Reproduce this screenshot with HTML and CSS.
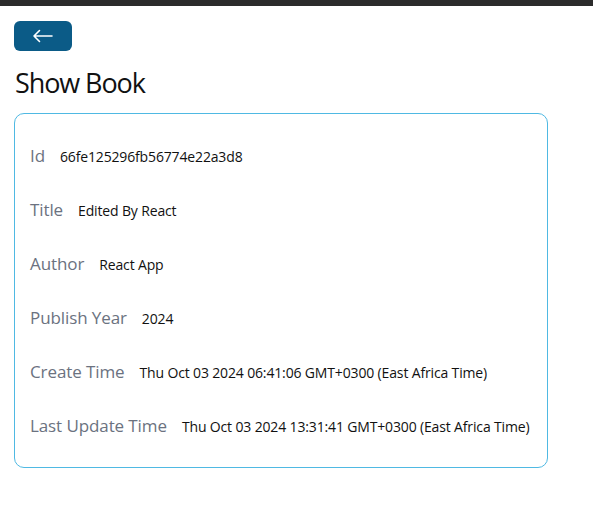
FILE: index.html
```html
<!DOCTYPE html>
<html>
<head>
<meta charset="utf-8">
<link rel="stylesheet" href="styles.css">
</head>
<body>
<div class="topbar"></div>
<div class="page">
  <button class="back" type="button" aria-label="Back">
    <svg width="22" height="14" viewBox="0 0 22 14" fill="none" stroke="#fff" stroke-width="1.6" stroke-linecap="round" stroke-linejoin="round"><path d="M20 7H2M7.5 1.5L2 7l5.5 5.5"/></svg>
  </button>
  <h1 class="title">Show Book</h1>
  <div class="card">
    <div class="row"><span class="label">Id</span><span class="value">66fe125296fb56774e22a3d8</span></div>
    <div class="row"><span class="label">Title</span><span class="value">Edited By React</span></div>
    <div class="row"><span class="label">Author</span><span class="value">React App</span></div>
    <div class="row"><span class="label">Publish Year</span><span class="value">2024</span></div>
    <div class="row"><span class="label">Create Time</span><span class="value">Thu Oct 03 2024 06:41:06 GMT+0300 (East Africa Time)</span></div>
    <div class="row"><span class="label">Last Update Time</span><span class="value">Thu Oct 03 2024 13:31:41 GMT+0300 (East Africa Time)</span></div>
  </div>
</div>
</body>
</html>
```
FILE: styles.css
```css
* { box-sizing: border-box; }
body {
  margin: 0;
  background: #fff;
  font-family: "Open Sans", "Noto Sans", sans-serif;
  color: #111;
}
.topbar {
  height: 6px;
  background: #2b2b2b;
}
.page {
  padding: 15px 14px;
}
.back {
  display: flex;
  align-items: center;
  justify-content: center;
  width: 58px;
  height: 30px;
  border: none;
  border-radius: 6px;
  background: #0b5b87;
  padding: 0;
}
.title {
  margin: 14px 0 12px 1px;
  font-size: 27px;
  font-weight: 400;
  line-height: 36px;
  letter-spacing: -1.1px;
  color: #111;
}
.card {
  width: 534px;
  border: 1px solid #4fb9e3;
  border-radius: 10px;
  padding: 15px 15px 14px;
}
.row {
  height: 54px;
  display: flex;
  align-items: baseline;
  gap: 15px;
  padding-top: 15px;
  white-space: nowrap;
}
.label {
  font-size: 17px;
  color: #6b7280;
  letter-spacing: -0.1px;
}
.value {
  font-size: 14px;
  color: #111;
  letter-spacing: -0.15px;
}
```
